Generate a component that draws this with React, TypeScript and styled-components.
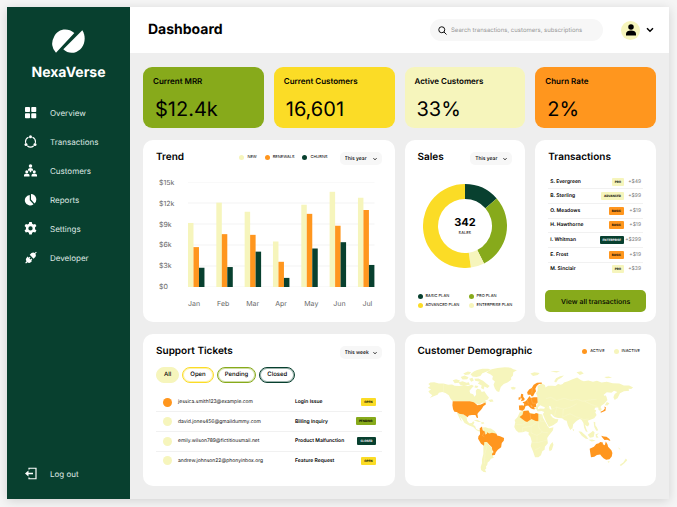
import React from "react";
import styled, { createGlobalStyle, css } from "styled-components";

const c = {
  forest: "#08402f",
  green: "#87aa1b",
  yellow: "#fbdc26",
  cream: "#f6f5bc",
  orange: "#ff961e",
  canvas: "#eeeeee",
  soft: "#f7f7f7",
};

type Tone = "forest" | "green" | "yellow" | "cream" | "orange";

const GlobalStyle = createGlobalStyle`
  *, *::before, *::after { box-sizing: border-box; }
  body {
    margin: 0;
    background: #f5f5f5;
    color: #000;
    font-family: Inter, "Liberation Sans", sans-serif;
    text-rendering: geometricPrecision;
  }
  button, input, select { font: inherit; color: inherit; border: 0; margin: 0; text-rendering: inherit; }
  h1, h2, h3, p, ul, dl, dd { margin: 0; padding: 0; }
  a { color: inherit; text-decoration: none; }
`;

const Page = styled.div`
  min-height: 100vh;
  display: flex;
  padding: 7px 8px 8px 7px;
`;

const Frame = styled.div`
  flex: 1;
  display: grid;
  grid-template-columns: 123px minmax(0, 1fr);
  background: ${c.canvas};
  box-shadow: 0 2px 10px rgba(0, 0, 0, 0.14);
`;

const Sidebar = styled.aside`
  display: flex;
  flex-direction: column;
  background: ${c.forest};
  color: #fff;
  padding: 22px 0 11px;
`;

const Brand = styled.a`
  display: flex;
  flex-direction: column;
  align-items: center;
  gap: 12px;
  font-size: 14px;
  line-height: 16px;
  font-weight: 700;
`;

const Nav = styled.nav`
  display: flex;
  flex-direction: column;
  flex: 1;
  margin-top: 17px;
`;

const navItem = css`
  display: flex;
  align-items: center;
  gap: 13px;
  height: 29px;
  padding: 0 0 0 17px;
  font-size: 8px;
  line-height: 12px;
  color: #dfe8e4;
`;
const NavLink = styled.a`${navItem}`;
const LogoutButton = styled.button`
  ${navItem}
  background: none;
  text-align: left;
  cursor: pointer;
`;

const NavIcon = styled.svg`
  width: 13px;
  height: 13px;
  color: #fff;
`;

const Main = styled.div`
  display: flex;
  flex-direction: column;
  min-width: 0;
`;

const Header = styled.header`
  display: flex;
  align-items: center;
  height: 46px;
  padding: 0 15px 0 18px;
  background: #fff;
`;

const PageTitle = styled.h1`
  font-size: 14px;
  line-height: 18px;
  font-weight: 700;
  flex: 1;
`;

const SearchBox = styled.label`
  display: flex;
  align-items: center;
  gap: 4px;
  width: 173px;
  height: 22px;
  padding: 0 8px;
  border-radius: 11px;
  background: ${c.soft};
`;

const SearchInput = styled.input`
  flex: 1;
  min-width: 0;
  padding: 1px 0 0;
  background: none;
  font-size: 6px;
  line-height: 10px;
  outline: none;
  &::placeholder { color: #999; opacity: 1; }
`;

const ProfileButton = styled.button`
  display: flex;
  align-items: center;
  gap: 6px;
  padding: 0;
  margin-left: 18px;
  background: none;
  cursor: pointer;
`;

const Avatar = styled.span`
  display: grid;
  place-items: center;
  width: 19px;
  height: 19px;
  border-radius: 50%;
  background: ${c.cream};
`;

const Board = styled.main`
  flex: 1;
  display: grid;
  grid-template-columns: repeat(4, minmax(0, 1fr));
  grid-template-rows: auto 182fr 152fr;
  gap: 12px 10px;
  padding: 14px 13px 13px;
`;

const StatCard = styled.section<{ $tone: Tone }>`
  background: ${(p) => c[p.$tone]};
  border-radius: 9px;
  padding: 9px 10px 7px;
`;

const StatLabel = styled.h2`
  font-size: 8px;
  line-height: 11px;
  font-weight: 600;
`;

const StatValue = styled.p`
  font-size: 20px;
  line-height: 24px;
  font-weight: 400;
  margin-top: 10px;
  padding-left: 2px;
`;

const Card = styled.section<{ $span?: number }>`
  display: flex;
  flex-direction: column;
  grid-column: span ${(p) => p.$span ?? 1};
  background: #fff;
  border-radius: 10px;
  padding: 10px 13px;
`;

const CardHead = styled.div`
  display: flex;
  align-items: center;
  height: 14px;
`;

const CardTitle = styled.h2`
  flex: 1;
  font-size: 10px;
  line-height: 14px;
  font-weight: 600;
  white-space: nowrap;
`;

const SelectWrap = styled.span`
  position: relative;
  display: block;
  margin-top: 3px;
`;

const Select = styled.select`
  appearance: none;
  display: block;
  width: 42px;
  height: 13px;
  padding: 0 0 0 5px;
  border-radius: 5px;
  background: ${c.soft};
  font-size: 5px;
  font-weight: 500;
`;

const SelectArrow = styled.svg`
  position: absolute;
  right: 5px;
  top: 5px;
  width: 4px;
  height: 4px;
  pointer-events: none;
`;

const Legend = styled.ul<{ $end: number; $gap: number }>`
  display: flex;
  list-style: none;
  gap: ${(p) => p.$gap}px;
  margin-right: ${(p) => p.$end}px;
`;

const LegendGrid = styled.ul`
  display: grid;
  grid-template-columns: 51px auto;
  list-style: none;
  row-gap: 3px;
  margin-bottom: 4px;
  white-space: nowrap;
`;

const LegendItem = styled.li`
  display: flex;
  align-items: center;
  gap: 3px;
  font-size: 4px;
  line-height: 6px;
`;

const Dot = styled.span<{ $tone: Tone; $size?: number }>`
  display: block;
  flex: none;
  width: ${(p) => p.$size ?? 5}px;
  height: ${(p) => p.$size ?? 5}px;
  border-radius: 50%;
  background: ${(p) => c[p.$tone]};
`;

const Chart = styled.div`
  display: grid;
  grid-template-columns: 31px minmax(0, 1fr);
  row-gap: 12px;
  margin: 18px 7px 0 1px;
`;

const AxisY = styled.div`
  display: flex;
  flex-direction: column;
  justify-content: space-between;
  margin: -4px 0;
  padding-left: 2px;
  font-size: 7px;
  line-height: 9px;
  color: #666;
`;

const AxisX = styled.div`
  grid-column: 2;
  display: grid;
  grid-template-columns: repeat(7, 1fr);
  margin-right: -17px;
  font-size: 7px;
  line-height: 9px;
  color: #666;
`;

const Plot = styled.svg`
  width: 100%;
  height: 105px;
  display: block;
`;

const DonutWrap = styled.div`
  flex: 1;
  display: grid;
  place-items: center;
  padding-bottom: 6px;
  > * { grid-area: 1 / 1; }
`;

const DonutLabel = styled.p`
  display: flex;
  flex-direction: column;
  align-items: center;
  font-size: 4px;
  line-height: 6px;
  strong { font-size: 11px; line-height: 12px; margin-bottom: 2px; }
`;

const TxTable = styled.table`
  width: 100%;
  height: 101px;
  margin-top: 11px;
  border-collapse: collapse;
  font-size: 5px;
  line-height: 8px;
  th, td { padding: 0; text-align: left; }
  th { padding-left: 2px; font-weight: 600; white-space: nowrap; }
  td { text-align: right; }
  td:last-child { width: 19px; padding-right: 2px; color: #777; }
  tr + tr { border-top: 1px solid #f1f1f1; }
`;

const Badge = styled.span<{ $tone: Tone }>`
  display: inline-block;
  vertical-align: middle;
  height: 8px;
  padding: 0 3px;
  border-radius: 1px;
  background: ${(p) => c[p.$tone]};
  color: ${(p) => (p.$tone === "forest" ? "#fff" : "#000")};
  font-size: 3px;
  line-height: 8px;
  font-weight: 700;
`;

const PrimaryButton = styled.button`
  height: 22px;
  margin: auto -3px 0;
  padding: 0;
  border-radius: 5px;
  background: ${c.green};
  font-size: 7px;
  font-weight: 500;
  cursor: pointer;
`;

const Pills = styled.div`
  display: flex;
  gap: 3px;
  margin-top: 9px;
`;

const Pill = styled.button<{ $tone: Tone; $filled?: boolean }>`
  height: 16px;
  padding: 0 7px;
  border: 1px solid ${(p) => c[p.$tone]};
  border-radius: 8px;
  background: ${(p) => (p.$filled ? c[p.$tone] : "#fff")};
  box-shadow: inset 0 0 0 ${(p) => (p.$filled ? 0 : 1)}px ${(p) => c[p.$tone]}66;
  font-size: 6px;
  line-height: 8px;
  font-weight: 500;
  cursor: pointer;
`;

const TicketTable = styled.table`
  width: 100%;
  height: 77px;
  margin-top: 10px;
  border-collapse: collapse;
  font-size: 5px;
  line-height: 8px;
  th, td { padding: 0; text-align: left; }
  td:first-child { width: 22px; padding-left: 7px; }
  td:nth-child(2) { width: 117px; color: #111; }
  th { font-weight: 600; }
  td:last-child { text-align: right; padding-right: 6px; }
  tr + tr { border-top: 1px solid #f1f1f1; }
`;

const MapSvg = styled.svg`
  display: block;
  width: 100%;
  height: 0;
  flex: 1 0 100px;
  margin: 9px 0 3px;
`;

const Icon = ({ children }: { children: React.ReactNode }) => (
  <NavIcon viewBox="0 0 26 26" fill="currentColor" aria-hidden="true">{children}</NavIcon>
);

const navItems = [
  { label: "Overview", icon: <Icon><rect x="2" y="2" width="10" height="10" rx="1.5" /><rect x="14.500" y="2" width="10" height="10" rx="1.500" /><rect x="2" y="14.500" width="10" height="10" rx="1.500" /><rect x="14.500" y="14.500" width="10" height="10" rx="1.500" /></Icon> },
  { label: "Transactions", icon: <Icon><g fill="none" stroke="currentColor" strokeWidth="2.200"><path d="M9 4.500A10 10 0 0 0 3.500 16M17 4.500A10 10 0 0 1 22.500 16M6.500 21.500A10 10 0 0 0 19.500 21.500" /></g><circle cx="13" cy="3.500" r="3" /><circle cx="4" cy="19" r="3" /><circle cx="22" cy="19" r="3" /></Icon> },
  { label: "Customers", icon: <Icon><circle cx="13" cy="4" r="3.500" /><path d="M8 13.500V11q0-3 5-3t5 3v2.500h-3.500v3h-3v-3z" /><circle cx="5.500" cy="15.500" r="3" /><circle cx="20.500" cy="15.500" r="3" /><path d="M0 25v-3q0-3 5.500-3t5.500 3v3zM15 25v-3q0-3 5.500-3t5.500 3v3z" /></Icon> },
  { label: "Reports", icon: <Icon><path d="M11.500 4v10.500l7.500 8A10.500 10.500 0 1 1 11.500 4z" /><path d="M14 2a11 11 0 0 1 7 19l-7-8z" /></Icon> },
  { label: "Settings", icon: <Icon><path fillRule="evenodd" d="M10.500 0h5l.8 3.700 2.500 1.400 3.600-1.300 2.500 4.400-2.800 2.500v3.600l2.800 2.500-2.500 4.400-3.600-1.200-2.500 1.400-.8 3.600h-5l-.8-3.600-2.500-1.400-3.600 1.200-2.500-4.400 2.800-2.500v-3.600L1.100 8.200l2.500-4.400 3.600 1.300 2.500-1.400zM13 8.500a4.300 4.300 0 1 0 0 8.600 4.300 4.300 0 0 0 0-8.600z" /></Icon> },
  { label: "Developer", icon: <Icon><path d="M11.500 7.500 15 4q3.500-2.500 6.500 0L24 1.500 25.500 3 22.500 5.500q2.500 3.500 0 6.500L19 15.500zM7 11l2.500 2.500L11.500 11.500 13 13l-2 2 2 2 2-2 1.500 1.500-2 2L16 20l-2.500 2.500q-3.500 2.500-6.500 0L4 25 2.500 23.500 5 20.500q-2.500-3.500 0-6.500z" /></Icon> },
];

const PeriodSelect = ({ label, value }: { label: string; value: string }) => (
  <SelectWrap>
    <Select defaultValue={value} aria-label={label}>
      <option>This week</option>
      <option>This year</option>
    </Select>
    <SelectArrow viewBox="0 0 8 8" fill="none" stroke="#000" strokeWidth="1.800" aria-hidden="true">
      <path d="M1 2.500 4 5.500 7 2.500" />
    </SelectArrow>
  </SelectWrap>
);

const stats: { label: string; value: string; tone: Tone }[] = [
  { label: "Current MRR", value: "$12.4k", tone: "green" },
  { label: "Current Customers", value: "16,601", tone: "yellow" },
  { label: "Active Customers", value: "33%", tone: "cream" },
  { label: "Churn Rate", value: "2%", tone: "orange" },
];

const trend = [
  { month: "Jan", values: [9.15, 5.7, 2.75] },
  { month: "Feb", values: [12.05, 7.55, 2.85] },
  { month: "Mar", values: [10.75, 7.45, 5.05] },
  { month: "Apr", values: [6.5, 3.6, 1.3] },
  { month: "May", values: [11.75, 10.45, 5.5] },
  { month: "Jun", values: [13.6, 8.75, 6.4] },
  { month: "Jul", values: [12.75, 11, 3.15] },
];
const seriesTones: Tone[] = ["cream", "orange", "forest"];

const TrendPlot = () => (
  <Plot viewBox="0 0 561 315" preserveAspectRatio="none" role="img" aria-label="Monthly trend">
    {[0, 3, 6, 9, 12, 15].map((v) => (
      <line key={v} x1="0" x2="561" y1={315 - v * 21} y2={315 - v * 21} stroke="#f3f3f3" strokeWidth="3" />
    ))}
    {trend.map((t, i) =>
      t.values.map((v, j) => (
        <rect key={`${i}-${j}`} x={i * 85.2 + j * 16.5} y={315 - v * 21} width="16.5" height={v * 21} fill={c[seriesTones[j]]} />
      ))
    )}
  </Plot>
);

const slices: { from: number; to: number; tone: Tone }[] = [
  { from: 0, to: 49, tone: "forest" },
  { from: 49, to: 153, tone: "green" },
  { from: 153, to: 172, tone: "cream" },
  { from: 172, to: 360, tone: "yellow" },
];

const arc = (from: number, to: number) => {
  const pt = (deg: number, r: number) => {
    const a = (deg * Math.PI) / 180;
    return `${(42 + r * Math.sin(a)).toFixed(2)} ${(42 - r * Math.cos(a)).toFixed(2)}`;
  };
  const big = to - from > 180 ? 1 : 0;
  return `M${pt(from, 42)}A42 42 0 ${big} 1 ${pt(to, 42)}L${pt(to, 27)}A27 27 0 ${big} 0 ${pt(from, 27)}Z`;
};

const plans: { label: string; tone: Tone }[] = [
  { label: "BASIC PLAN", tone: "forest" },
  { label: "PRO PLAN", tone: "green" },
  { label: "ADVANCED PLAN", tone: "yellow" },
  { label: "ENTERPRISE PLAN", tone: "cream" },
];

const transactions: { name: string; plan: string; amount: string; tone: Tone }[] = [
  { name: "S. Evergreen", plan: "PRO", amount: "+$49", tone: "cream" },
  { name: "B. Sterling", plan: "ADVANCED", amount: "+$99", tone: "cream" },
  { name: "O. Meadows", plan: "BASIC", amount: "+$19", tone: "orange" },
  { name: "H. Hawthorne", plan: "BASIC", amount: "+$19", tone: "orange" },
  { name: "I. Whitman", plan: "ENTERPRISE", amount: "+$299", tone: "forest" },
  { name: "E. Frost", plan: "BASIC", amount: "+$19", tone: "orange" },
  { name: "M. Sinclair", plan: "PRO", amount: "+$39", tone: "cream" },
];

const tickets: { email: string; issue: string; status: string; tone: Tone; dot: Tone }[] = [
  { email: "jessica.smith123@example.com", issue: "Login Issue", status: "OPEN", tone: "yellow", dot: "orange" },
  { email: "david.jones456@gmaildummy.com", issue: "Billing Inquiry", status: "PENDING", tone: "green", dot: "cream" },
  { email: "emily.wilson789@fictitiousmail.net", issue: "Product Malfunction", status: "CLOSED", tone: "forest", dot: "cream" },
  { email: "andrew.johnson22@phonyinbox.org", issue: "Feature Request", status: "OPEN", tone: "yellow", dot: "cream" },
];

const WorldMap = () => (
  <MapSvg viewBox="80 110 622 322" role="img" aria-label="World map of active customers">
    <g fill={c.cream}>
      {/* Alaska and Canada */}
      <path d="M80 162 86 157 98 156 112 160 126 160 140 164 152 163 160 167 174 168 188 165 200 168 212 164 218 168 212 174 205 182 207 190 216 193 220 200 225 194 224 182 229 176 238 178 242 186 250 184 258 196 264 203 261 209 252 212 257 216 251 222 244 218 234 225 226 222 214 216 204 214H154L147 206 142 196 132 189 122 186 112 188 108 194 98 198 84 204 92 196 84 190 80 184 88 178 78 173 86 168Z" />
      {/* Canadian Arctic */}
      <path d="M154 150 164 147 176 151 172 158 160 159ZM172 156 184 153 196 158 203 156 206 164 190 166 176 164ZM178 140 190 136 202 141 198 147 184 148ZM204 146 214 143 218 151 210 155ZM208 132 218 124 228 119 244 115 262 115 270 118 258 124 244 129 238 137 226 140 214 139ZM186 130 200 124 210 126 204 133 192 134ZM220 146 232 145 246 152 256 160 266 168 260 174 250 169 248 178 240 174 242 166 230 160 236 155 222 152ZM222 166 232 168 228 174 220 172ZM262 210 274 208 278 215 268 216Z" />
      {/* Greenland and Iceland */}
      <path d="M256 127 272 117 290 113 312 111 330 112 338 117 349 120 338 126 337 136 331 143 332 149 320 157 309 162 300 171 295 186 288 184 282 175 278 164 282 154 274 147 276 138 268 132ZM330 172 338 170 346 173 342 178 334 178Z" />
      {/* Mexico, Central America and Caribbean */}
      <path d="M166 248 176 252 190 256 196 262 198 273 204 281 212 280 216 275 220 278 216 286 222 289 225 298 234 302 238 300 240 304 234 306 226 302 216 292 204 288 190 280 184 270 176 260 182 276 177 271 171 258ZM218 272 228 270 240 276 232 277ZM240 278 248 278 250 282 242 283Z" />
      <path d="M246 294 254 293 262 296 270 297 282 305 287 313 280 317 265 315 257 318 248 307Z" />
      <path d="M248 336 258 338 264 348 273 355 273 362 278 374 276 382 279 386 270 389 265 396 260 400 259 407 255 412 256 418 252 422 256 430 248 429 240 423 239 414 243 402 243 390 247 374 247 356Z" />
      {/* Africa and Madagascar */}
      <path d="M358 247 368 243 384 242 390 250 402 252 412 251 426 254 428 264 436 278 443 291 448 296 460 293 458 303 446 318 441 326 443 342 434 352 433 361 426 366 422 378 414 384 404 384 398 367 391 350 394 336 390 322 384 315 385 308 376 305 366 308 354 309 346 302 341 292 344 278 342 272 351 262ZM457 338 460 346 455 362 448 366 446 357 450 346Z" />
      {/* Asia and Eastern Europe */}
      <path d="M412 168 424 160 434 165 436 172 444 167 456 167 466 168 474 162 482 164 488 162 492 157 504 153 516 148 532 142 544 150 552 153 566 151 580 155 592 152 606 157 622 155 640 159 660 160 674 166 690 166 702 172 696 177 688 176 690 182 674 184 662 190 655 204 646 210 642 202 646 192 654 186 644 182 636 188 622 187 612 195 620 200 624 210 614 222 606 227 603 232 607 238 603 244 597 241 596 233 588 233 584 238 590 242 587 248 591 256 584 266 570 271 564 273 569 283 565 291 558 288 555 284 560 298 564 308 558 305 553 294 551 280 545 270 540 268 530 274 520 284 518 295 511 301 504 288 500 273 494 272 486 266 474 265 463 262 454 253 450 255 458 264 466 268 475 269 472 278 459 287 446 292 438 277 431 261 428 253 432 247 424 244 412 245 408 238 402 236 410 230 412 218 411 198 407 190 412 182Z" />
      <path d="M390 130 402 126 418 128 412 134 398 137ZM450 124 466 122 480 123 470 127ZM462 154 468 144 480 138 492 136 484 143 474 148 468 157ZM530 126 544 123 552 130 540 134ZM614 140 628 139 638 143 622 144ZM622 216 630 220 624 227 616 226ZM617 194 621 200 620 212 617 207Z" />
      {/* South-East Asia and New Zealand */}
      <path d="M518 297 523 301 520 305ZM536 305 545 307 560 320 566 329 558 328 546 319ZM566 331 578 330 588 334 576 336ZM564 316 574 309 580 304 585 309 582 323 571 325ZM582 276 587 278 587 287 592 294 596 303 590 304 584 292ZM588 314 598 311 592 317 597 325 589 324ZM624 396 631 396 628 402ZM680 388 684 393 676 402 665 411 661 408 672 400ZM656 354 664 360 660 360Z" />
    </g>
    <g fill={c.orange}>
      <path d="M154 214H206L218 217 224 222 229 226 238 225 246 221 253 218 255 223 247 229 243 236 238 242 232 248 229 253 231 265 227 264 223 256 212 256 203 257 199 263 193 258 187 254 174 252 166 247 159 246 155 238 153 226Z" />
      <path d="M236 296 243 291 245 302 252 307 253 315 258 313 258 308 265 312 273 310 281 311 287 313 289 318 298 320 310 326 309 334 303 341 301 354 291 361 285 369 282 377 274 378 273 374 278 368 274 362 273 354 265 346 258 338 250 338 249 349 240 343 231 328 232 320 237 314Z" />
      <path d="M357 262 366 255 369 244 384 242 387 249 391 251 402 253 407 250 414 252 414 275 406 274 393 268 380 277 374 275Z" />
      <path d="M380 187 386 178 394 174 400 164 410 158 424 157 425 161 416 162 409 168 405 176 407 184 403 189 398 199 393 199 391 194 382 194ZM362 191 368 193 368 200 373 207 370 212 361 214 364 207 360 201ZM354 203 360 201 360 208 354 210Z" />
      <path d="M355 227 365 226 370 228 371 222 366 217 374 215 379 210 384 203 388 198 391 204 400 202 411 202 412 218 407 223 408 231 401 232 404 238 398 238 395 229 389 224 396 232 398 238 391 235 383 227 375 229 372 238 366 243 356 241Z" />
      <path d="M603 246 611 242 616 237 615 230 619 232 618 243 609 247 604 249ZM605 319 613 321 621 322 630 329 633 335 623 331 615 332 609 325Z" />
      <path d="M570 358 583 352 590 344 598 342 602 338 610 339 610 345 616 348 619 336 624 345 626 352 636 363 639 371 637 382 630 390 620 392 612 387 606 381 602 376 592 377 584 383 574 384 572 372Z" />
    </g>
    {/* Inland seas */}
    <path fill="#fff" d="M413 232 420 226 426 229 434 232 432 237 420 236 413 238ZM446 228 452 230 454 240 449 238Z" />
    <g fill="none" stroke="#fff" strokeOpacity="0.45" strokeWidth="1">
      <path d="M126 160V188M388 243 391 268M346 285H366L380 277M366 308V294L392 290 414 275M392 290V310L410 318 426 308M414 275V292L426 308 444 310M392 340H410V322M410 340 426 336 441 332M404 362 420 354M425 255 420 275H434M437 206 452 202 470 212 492 205 515 212 530 208 550 214 572 210 590 208M440 232 456 238 470 232 490 238 512 232 530 222M470 232 462 262M490 238 488 262 510 252 530 262 544 266M555 214 575 224 594 230M544 266 552 270 568 268M251 340 258 352 252 372 250 404M252 307 244 318 250 322M380 210 384 222M392 204 396 220 411 220M371 222 380 228M396 174 394 190" />
    </g>
  </MapSvg>
);

export default function App() {
  return (
    <>
      <GlobalStyle />
      <Page>
        <Frame>
          <Sidebar>
            <Brand href="#">
              <svg width="33" height="24" viewBox="0 0 99 72" fill="#fff" aria-hidden="true">
                <path d="M12 71A38 38 0 0 1 6 24C16 0 46-6 67 12Z" />
                <path d="M34 61 91 4C108 32 92 66 66 71 54 73 43 70 34 61Z" />
              </svg>
              NexaVerse
            </Brand>
            <Nav aria-label="Main">
              {navItems.map((n) => (
                <NavLink href="#" key={n.label}>{n.icon}{n.label}</NavLink>
              ))}
            </Nav>
            <LogoutButton type="button">
              <Icon>
                <path d="M10 5V2.500h14v21H10V21" fill="none" stroke="currentColor" strokeWidth="2.400" />
                <path d="M2 13 9 7v4.500h9v3H9V19z" />
              </Icon>
              Log out
            </LogoutButton>
          </Sidebar>

          <Main>
            <Header>
              <PageTitle>Dashboard</PageTitle>
              <SearchBox>
                <svg width="9" height="9" viewBox="0 0 18 18" fill="none" stroke="#111" strokeWidth="2" aria-hidden="true">
                  <circle cx="7.500" cy="7.500" r="6" /><path d="m12 12 5 5" />
                </svg>
                <SearchInput type="search" aria-label="Search" placeholder="Search transactions, customers, subscriptions" />
              </SearchBox>
              <ProfileButton type="button" aria-label="Account menu">
                <Avatar>
                  <svg width="10" height="12" viewBox="0 0 20 24" aria-hidden="true"><circle cx="10" cy="6" r="5.500" /><path d="M0 23v-4q1-6 10-6t10 6v4z" /></svg>
                </Avatar>
                <svg width="8" height="6" viewBox="0 0 16 12" fill="none" stroke="#000" strokeWidth="3" aria-hidden="true"><path d="m2 2.500 6 6 6-6" /></svg>
              </ProfileButton>
            </Header>

            <Board>
              {stats.map((s) => (
                <StatCard $tone={s.tone} key={s.label}>
                  <StatLabel>{s.label}</StatLabel>
                  <StatValue>{s.value}</StatValue>
                </StatCard>
              ))}

              <Card $span={2}>
                <CardHead>
                  <CardTitle>Trend</CardTitle>
                  <Legend $end={12} $gap={8}>
                    <LegendItem><Dot $tone="cream" />NEW</LegendItem>
                    <LegendItem><Dot $tone="orange" />RENEWALS</LegendItem>
                    <LegendItem><Dot $tone="forest" />CHURNS</LegendItem>
                  </Legend>
                  <PeriodSelect label="Trend period" value="This year" />
                </CardHead>
                <Chart>
                  <AxisY>
                    {["$15k", "$12k", "$9k", "$6k", "$3k", "$0"].map((t) => <span key={t}>{t}</span>)}
                  </AxisY>
                  <TrendPlot />
                  <AxisX>{trend.map((t) => <span key={t.month}>{t.month}</span>)}</AxisX>
                </Chart>
              </Card>

              <Card>
                <CardHead>
                  <CardTitle>Sales</CardTitle>
                  <PeriodSelect label="Sales period" value="This year" />
                </CardHead>
                <DonutWrap>
                  <svg width="84" height="84" viewBox="0 0 84 84" role="img" aria-label="Sales by plan">
                    {slices.map((s) => <path key={s.tone} d={arc(s.from, s.to)} fill={c[s.tone]} />)}
                  </svg>
                  <DonutLabel><strong>342</strong>SALES</DonutLabel>
                </DonutWrap>
                <LegendGrid>
                  {plans.map((p) => <LegendItem key={p.label}><Dot $tone={p.tone} />{p.label}</LegendItem>)}
                </LegendGrid>
              </Card>

              <Card>
                <CardHead><CardTitle>Transactions</CardTitle></CardHead>
                <TxTable>
                  <tbody>
                    {transactions.map((t) => (
                      <tr key={t.name}>
                        <th scope="row">{t.name}</th>
                        <td><Badge $tone={t.tone}>{t.plan}</Badge></td>
                        <td>{t.amount}</td>
                      </tr>
                    ))}
                  </tbody>
                </TxTable>
                <PrimaryButton type="button">View all transactions</PrimaryButton>
              </Card>

              <Card $span={2}>
                <CardHead>
                  <CardTitle>Support Tickets</CardTitle>
                  <PeriodSelect label="Ticket period" value="This week" />
                </CardHead>
                <Pills>
                  <Pill type="button" $tone="cream" $filled>All</Pill>
                  <Pill type="button" $tone="yellow">Open</Pill>
                  <Pill type="button" $tone="green">Pending</Pill>
                  <Pill type="button" $tone="forest">Closed</Pill>
                </Pills>
                <TicketTable>
                  <tbody>
                    {tickets.map((t) => (
                      <tr key={t.email}>
                        <td><Dot $tone={t.dot} $size={9} /></td>
                        <td>{t.email}</td>
                        <th scope="row">{t.issue}</th>
                        <td><Badge $tone={t.tone}>{t.status}</Badge></td>
                      </tr>
                    ))}
                  </tbody>
                </TicketTable>
              </Card>

              <Card $span={2}>
                <CardHead>
                  <CardTitle>Customer Demographic</CardTitle>
                  <Legend $end={3} $gap={9}>
                    <LegendItem><Dot $tone="orange" />ACTIVE</LegendItem>
                    <LegendItem><Dot $tone="cream" />INACTIVE</LegendItem>
                  </Legend>
                </CardHead>
                <WorldMap />
              </Card>
            </Board>
          </Main>
        </Frame>
      </Page>
    </>
  );
}
